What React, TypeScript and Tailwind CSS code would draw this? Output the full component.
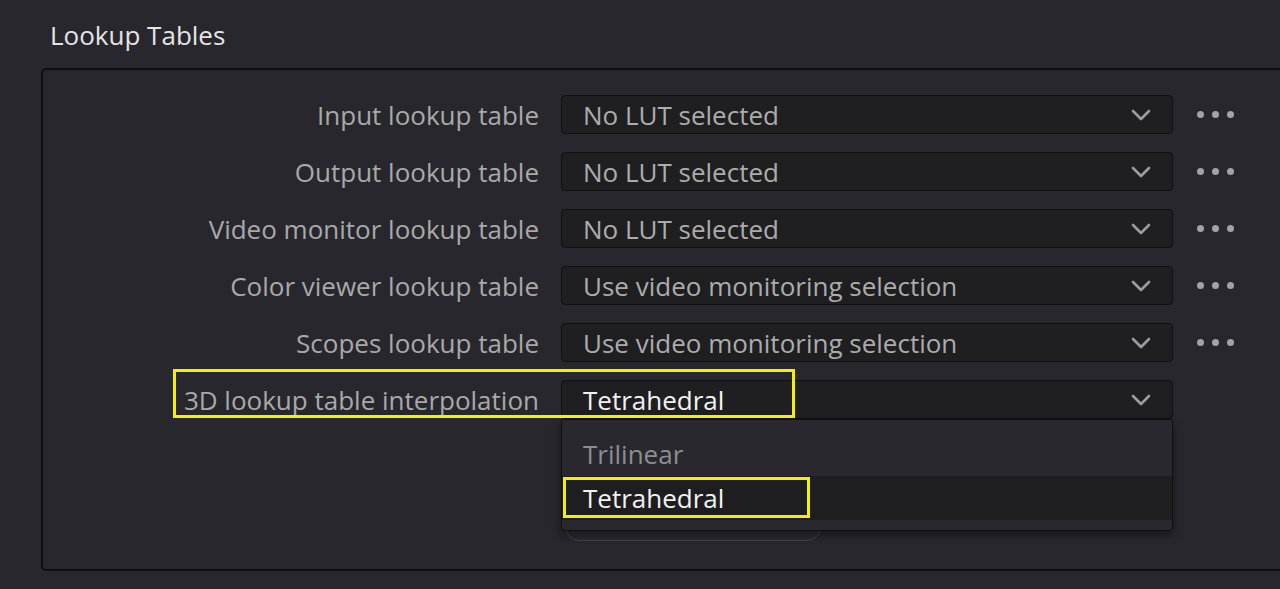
import React from 'react';

const rows = [
  { label: 'Input lookup table', value: 'No LUT selected' },
  { label: 'Output lookup table', value: 'No LUT selected' },
  { label: 'Video monitor lookup table', value: 'No LUT selected' },
  { label: 'Color viewer lookup table', value: 'Use video monitoring selection' },
  { label: 'Scopes lookup table', value: 'Use video monitoring selection' },
];

function Chevron() {
  return (
    <svg width="20" height="12" viewBox="0 0 20 12" fill="none" className="shrink-0">
      <path d="M2 2l8 8 8-8" stroke="#9c9c9c" strokeWidth="2.6" strokeLinecap="round" strokeLinejoin="round" />
    </svg>
  );
}

function MoreDots() {
  return (
    <div className="flex items-center gap-[8px] pl-[24px]">
      <span className="w-[7px] h-[7px] rounded-full bg-[#a3a3a3]" />
      <span className="w-[7px] h-[7px] rounded-full bg-[#a3a3a3]" />
      <span className="w-[7px] h-[7px] rounded-full bg-[#a3a3a3]" />
    </div>
  );
}

function Select({ value, active }: { value: string; active?: boolean }) {
  return (
    <div className="w-[612px] h-[39px] flex items-center justify-between pl-[21px] pr-[21px] bg-[#1f1f21] border border-[#111113] rounded-[4px]">
      <span className={active ? 'text-[#f2f2f2]' : 'text-[#acacac]'}>{value}</span>
      <Chevron />
    </div>
  );
}

export default function App() {
  return (
    <div
      className="w-[1280px] h-[589px] overflow-hidden bg-[#28272d] text-[26px] leading-none"
      style={{ fontFamily: '"Open Sans", "Noto Sans", sans-serif' }}
    >
      <h1 className="pl-[50px] pt-[22px] h-[68px] text-[26px] text-[#e4e4e4] font-normal">Lookup Tables</h1>

      <div className="ml-[41px] w-[1260px] h-[503px] border-2 border-[#0f0f11] rounded-[5px] pt-[25px]">
        <div className="flex flex-col gap-[18px]">
          {rows.map((r) => (
            <div key={r.label} className="flex items-center">
              <div className="w-[496px] text-right text-[#a9a9a9]">{r.label}</div>
              <div className="ml-[22px]">
                <Select value={r.value} />
              </div>
              <MoreDots />
            </div>
          ))}

          <div className="relative flex items-center">
            <div className="w-[496px] text-right text-[#a9a9a9]">3D lookup table interpolation</div>
            <div className="relative ml-[22px]">
              <Select value="Tetrahedral" active />

              {/* open interpolation menu */}
              <div className="absolute left-0 top-full z-20 w-[612px] h-[112px] pt-[12px] bg-[#29282e] border border-[#111113] rounded-b-[4px] shadow-[0_4px_10px_rgba(0,0,0,0.45)]">
                <div className="h-[44px] flex items-center pl-[21px] text-[#8e8e8e]">Trilinear</div>
                <div className="relative h-[44px] flex items-center pl-[21px] bg-[#1e1e20] text-[#f2f2f2]">
                  Tetrahedral
                  <div className="absolute left-[1px] top-[1px] w-[247px] h-[41px] border-[3px] border-[#f3f000]" />
                </div>
              </div>
            </div>

            <div className="absolute left-[130px] top-[-11px] w-[622px] h-[49px] border-[3px] border-[#f3f000] z-30" />
          </div>

          <div className="ml-[522px] mt-[66px] w-[256px] h-[38px] rounded-[14px] border border-[#45444a] bg-[#2b2a30]" />
        </div>
      </div>
    </div>
  );
}
